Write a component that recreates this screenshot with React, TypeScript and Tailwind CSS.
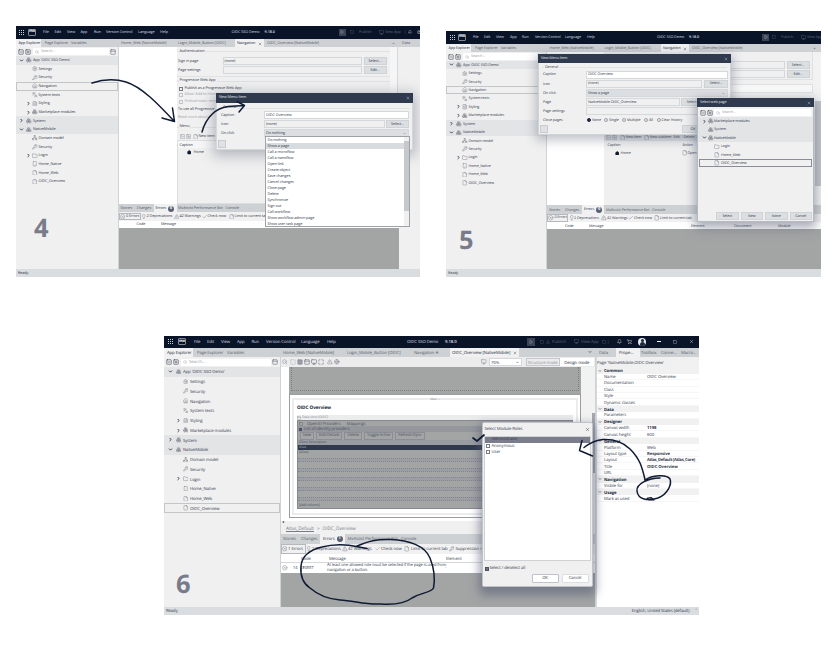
import React, { Fragment, type ReactNode } from "react";
import {
  Boxes, ChevronDown, ChevronRight, File, FileText, Folder, Globe, Home, KeyRound, Languages,
  Lightbulb, Network, Search, Settings, TriangleAlert, Smartphone, Check, CircleX, Columns2,
  Maximize, PanelTop, Square, ShoppingCart, Bell, Play, CircleUser, SquareMinus, SquarePlus, X, Upload, Monitor,
} from "lucide-react";

type Cell = [number, ReactNode, string?];

/* A row of cells; every cell starts at its own tab stop, counted from `from`. */
function Line({ from = 0, at, cls = "" }: { from?: number; at: Cell[]; cls?: string }) {
  return (
    <div className={`flex shrink-0 items-center whitespace-nowrap ${cls}`}>
      <div className="shrink-0" style={{ width: at[0][0] - from }} />
      {at.map(([x, node, c], i) => (
        <div
          key={i}
          className={`flex shrink-0 items-center ${typeof node === "string" ? "pt-[1.5px]" : ""} ${c ?? ""}`}
          style={i < at.length - 1 ? { width: at[i + 1][0] - x } : undefined}
        >
          {node}
        </div>
      ))}
    </div>
  );
}

const ic = "size-[5.5px] shrink-0 text-[#7d818d]";

function Dots() {
  return (
    <div className="grid grid-cols-3 gap-[1px]">
      {Array.from({ length: 9 }, (_, i) => (
        <i key={i} className="size-[1px] bg-[#c9cdd6]" />
      ))}
    </div>
  );
}

function Mx() {
  return (
    <div className="flex h-[7px] w-[8px] items-center justify-center rounded-[1px] border border-[#7d8494] text-[4px] font-bold text-white">
      mx
    </div>
  );
}

const treeItems: { depth: number; label: string; icon: ReactNode; arrow?: "r" | "d" }[] = [
  { depth: 0, label: "App 'OIDC SSO Demo'", icon: <Boxes className={ic} />, arrow: "d" },
  { depth: 1, label: "Settings", icon: <Settings className={ic} /> },
  { depth: 1, label: "Security", icon: <KeyRound className={ic} /> },
  { depth: 1, label: "Navigation", icon: <Home className={ic} /> },
  { depth: 1, label: "System texts", icon: <Languages className={ic} /> },
  { depth: 1, label: "Styling", icon: <FileText className={ic} />, arrow: "r" },
  { depth: 1, label: "Marketplace modules", icon: <Boxes className={ic} />, arrow: "r" },
  { depth: 0, label: "System", icon: <Boxes className={ic} />, arrow: "r" },
  { depth: 0, label: "NativeMobile", icon: <Boxes className={ic} />, arrow: "d" },
  { depth: 1, label: "Domain model", icon: <Network className={ic} /> },
  { depth: 1, label: "Security", icon: <KeyRound className={ic} /> },
  { depth: 1, label: "Login", icon: <Folder className={ic} />, arrow: "r" },
  { depth: 1, label: "Home_Native", icon: <Smartphone className={ic} /> },
  { depth: 1, label: "Home_Web", icon: <File className={ic} /> },
  { depth: 1, label: "OIDC_Overview", icon: <File className={ic} /> },
];

const Arrow = ({ dir }: { dir: "r" | "d" }) =>
  dir === "r" ? <ChevronRight className="size-[5px] text-[#20283b]" strokeWidth={4} /> : <ChevronDown className="size-[5px] text-[#20283b]" strokeWidth={4} />;

/* stops: [arrow depth 0, icon depth 0, label depth 0, arrow depth 1, icon depth 1, label depth 1] */
function Tree({ rowCls, stops, selected }: { rowCls: string; stops: number[]; selected: number }) {
  return (
    <div className="flex flex-col">
      {treeItems.map((t, i) => {
        const o = t.depth * 3;
        return (
          <Line
            key={i}
            cls={`${rowCls} ${t.depth === 0 ? "bg-[#e2e4e6]" : ""} ${i === selected ? "outline outline-1 -outline-offset-1 outline-[#c3c6c9]" : ""}`}
            at={[
              [stops[o], t.arrow ? <Arrow dir={t.arrow} /> : null],
              [stops[o + 1], t.icon],
              [stops[o + 2], t.label],
            ]}
          />
        );
      })}
    </div>
  );
}

function SearchRow({ cls }: { cls: string }) {
  return (
    <div className={`flex shrink-0 items-center gap-[1px] px-[2px] ${cls}`}>
      <SquareMinus className="size-[6px] text-[#20283b]" />
      <SquarePlus className="size-[6px] text-[#20283b]" />
      <div className="ml-[1px] flex h-[7px] flex-1 items-center gap-[2px] bg-white pl-[2px] text-[#9a9da6]">
        <Search className="size-[4px]" />
        <span className="pt-px">Search...</span>
      </div>
      <PanelTop className="size-[6px] text-[#555b6a]" />
    </div>
  );
}

function Input({ cls, children }: { cls: string; children?: ReactNode }) {
  return <div className={`flex items-center border border-[#d5d8da] pl-[1px] pt-px ${cls}`}>{children}</div>;
}

function Btn({ cls = "", children }: { cls?: string; children: ReactNode }) {
  return <div className={`flex items-center justify-center border border-[#cfd3d6] bg-[#dcdfe2] pt-px ${cls}`}>{children}</div>;
}

function Legend({ text, cls = "" }: { text: string; cls?: string }) {
  return (
    <div className={`flex shrink-0 items-center gap-[1px] ${cls}`}>
      <i className="h-px w-[2px] bg-[#dfe1e3]" />
      <span>{text}</span>
      <i className="h-px flex-1 bg-[#dfe1e3]" />
    </div>
  );
}

const Box = ({ dim = false }: { dim?: boolean }) => (
  <i className={`mr-[2px] size-[4px] border ${dim ? "border-[#c2c5ca]" : "border-[#777b87]"}`} />
);

const Radio = ({ on = false }: { on?: boolean }) => (
  <i className={`mr-[1px] size-[4px] rounded-full border ${on ? "border-[#20283b] bg-[#20283b]" : "border-[#9a9da6]"}`} />
);

const Badge = ({ n }: { n: string }) => (
  <b className="ml-[2px] flex size-[6px] items-center justify-center rounded-full bg-[#5a6070] text-[4px] text-white">{n}</b>
);

const dark = "bg-[#0a1429] text-[#d9dce2]";
const bar = "bg-[#ced1d4] text-[#565b69]";
const tabOn = "h-full bg-[#f1f1f1] text-[#20283b]";
const Chip = ({ children, cls = "" }: { children: ReactNode; cls?: string }) => (
  <div className={`flex items-center pt-[1px] ${cls}`}>{children}</div>
);

const ArrowSvg = ({ d, w = 1.5 }: { d: string; w?: number }) => (
  <path d={d} fill="none" stroke="#101a33" strokeWidth={w} strokeLinecap="round" strokeLinejoin="round" />
);

const actions = [
  "Do nothing", "Show a page", "Call a microflow", "Call a nanoflow", "Open link", "Create object", "Save changes",
  "Cancel changes", "Close page", "Delete", "Synchronize", "Sign out", "Call workflow", "Show workflow admin page",
  "Show user task page",
];

function Four() {
  return (
    <section className="absolute left-[16px] top-[26px] flex h-[251px] w-[404px] flex-col overflow-hidden bg-[#f0f0f0] text-[3.8px] tracking-[-0.02em]">
      <Line
        from={16}
        cls={`h-[12.7px] ${dark}`}
        at={[
          [19, <Dots />], [28, <Mx />], [43, "File"], [54.5, "Edit"], [67, "View"], [80.5, "App"], [94, "Run"],
          [106, "Version Control"], [138, "Language"], [160, "Help"], [231.5, "OIDC SSO Demo"], [264.6, "9.18.0", "font-semibold"],
          [339, <div className="flex size-[7px] items-center justify-center bg-[#3b4355]"><Play className="size-[4px]" /></div>],
          [350, <Square className="size-[4px] text-[#5d6474]" />], [359, "Publish", "text-[#5d6474]"],
          [379, <Monitor className="size-[5px] text-[#5d6474]" />], [385, "View App", "text-[#5d6474]"], [404, "|", "text-[#5d6474]"], [408, <Bell className="size-[4px]" />], [417, <CircleUser className="size-[4px]" />],
        ]}
      />
      <Line
        from={16}
        cls={`h-[8.8px] ${bar}`}
        at={[
          [16, <span className="pl-[2.5px] pt-[1.5px]">App Explorer</span>, tabOn], [41, ""], [44.7, "Page Explorer"], [71, "Variables"], [121, "Home_Web [NativeMobile]"],
          [178, "Login_Mobile_Button [OIDC]"], [235, <Chip cls="w-full justify-between px-[2px]">Navigation <X className="size-[4px]" /></Chip>, tabOn],
          [264, ""], [267, "OIDC_Overview [NativeMobile]"], [392, <ChevronDown className="size-[3px]" strokeWidth={5} />], [402, "Data"],
        ]}
      />
      <div className="flex h-[221.5px] shrink-0">
        <aside className="flex w-[102.5px] shrink-0 flex-col border-r border-[#d0d3d6]">
          <SearchRow cls="h-[8.4px]" />
          <Tree rowCls="h-[8.66px]" stops={[3, 10, 17, 10, 16, 22.5]} selected={3} />
        </aside>
        <div className="flex w-[280px] shrink-0 flex-col">
          <div className="flex h-[156.5px] shrink-0">
            <div className="w-[58px] shrink-0 bg-white" />
            <div className="flex w-[213px] shrink-0 flex-col">
              <Legend text="Authentication" cls="h-[9px]" />
              <Line from={177} cls="h-[9px]" at={[[178.5, "Sign in page"], [223, <Input cls="h-[8px] w-[139px]">(none)</Input>], [364, <Btn cls="h-[8px] w-[23px]">Select...</Btn>]]} />
              <Line from={177} cls="h-[9.4px]" at={[[178.5, "Page settings"], [223, <Input cls="h-[8px] w-[139px]" />], [364, <Btn cls="h-[8px] w-[23px]">Edit...</Btn>]]} />
              <div className="mt-[1px] h-px bg-[#dfe1e3]" />
              <Legend text="Progressive Web App" cls="h-[8.6px]" />
              <Line cls="h-[6.6px]" at={[[2, <><Box />Publish as a Progressive Web App</>]]} />
              <Line cls="h-[6.6px] text-[#a5a8ae]" at={[[2, <><Box dim />Allow 'Add to Hom</>]]} />
              <Line cls="h-[6.6px] text-[#a5a8ae]" at={[[2, <><Box dim />Preload static reso</>]]} />
              <Line cls="h-[8.5px]" at={[[1.5, "To use all Progressive"]]} />
              <Line cls="h-[6.5px] text-[#a5a8ae]" at={[[1.5, "Read more about P"]]} />
              <Legend text="Menu" cls="mt-[2px] h-[10px]" />
              <Line from={177} cls="h-[8px]" at={[[180, <SquareMinus className={ic} />], [186, <SquarePlus className={ic} />], [193, <File className={ic} />], [199, "New item"]]} />
              <div className="flex flex-1 flex-col border border-[#dcdee0]">
                <Line cls="h-[7px] bg-[#f6f6f6]" at={[[2, "Caption"]]} />
                <Line cls="h-[8px]" at={[[9, <Home className="size-[4.5px] fill-[#101a33] text-[#101a33]" />], [16, "Home"]]} />
              </div>
            </div>
            <div className="flex w-[8px] justify-center border-r border-[#d5d8da] bg-[#f6f6f6] text-[#888]">ˆ</div>
          </div>
          <Line from={119} cls={`h-[8.5px] ${bar}`} at={[[121, "Stories"], [137, "Changes"], [154, <Chip cls="pl-[2px]">Errors<Badge n="0" /></Chip>, tabOn], [177, ""], [178.5, "MxAssist Performance Bot"], [226, "Console"]]} />
          <Line
            from={119}
            cls="h-[8.2px] bg-[#f1f1f1]"
            at={[[120, <><CircleX className={ic} />&nbsp;0 Errors</>, "outline outline-[0.5px] outline-[#b5b8bd]"], [140, ""], [141, <Lightbulb className={ic} />], [147, "2 Deprecations"], [174, <TriangleAlert className={ic} />], [180, "42 Warnings"], [202, <Check className={ic} />], [208, "Check now"], [229, <File className={ic} />], [235, "Limit to current tab"]]}
          />
          <Line from={119} cls="h-[7.3px] bg-white" at={[[137, "Code"], [161.5, "Message"], [267, "Element"], [311, "Document"], [358, "Module"]]} />
          <div className="h-[41px] bg-[#a2a5a4]" />
        </div>
      </div>
      <div className="flex flex-1 items-center bg-[#d9dde0] pl-[2px] pt-px">Ready</div>

      <div className="absolute left-[200px] top-[67px] flex h-[57px] w-[197px] flex-col border border-[#d5d8da] bg-[#f0f0f0] shadow-[0_3px_12px_3px_#5c647866]">
        <div className="-m-px flex h-[9.5px] shrink-0 items-center justify-between bg-[#303a4e] px-[3px] text-[#e3e5e9]">New Menu Item<X className="size-[4px]" /></div>
        <Legend text="General" cls="mx-[3px] mt-[4px] h-[5px]" />
        <Line from={217} cls="h-[9px]" at={[[221, "Caption"], [264, <Input cls="h-[8px] w-[145px] bg-white">OIDC Overview</Input>]]} />
        <Line from={217} cls="h-[9px]" at={[[221, "Icon"], [264, <Input cls="h-[8px] w-[121px]">(none)</Input>], [386, <Btn cls="h-[8px] w-[23px]">Select...</Btn>]]} />
        <Line from={217} cls="h-[9.5px]" at={[[221, "On click"], [264, <Input cls="h-[8px] w-[145px] justify-between bg-[#dcdfe2] pr-[2px]">Do nothing<ChevronDown className="size-[3px]" /></Input>]]} />
        <div className="ml-[1px] mt-[2px] size-[8px] border border-[#c8cbd0] bg-[#dfe1e4]" />
      </div>
      <div className="absolute left-[249px] top-[110px] flex h-[91px] w-[145px] border border-[#9da1a8] bg-white">
        <div className="flex flex-1 flex-col">
          {actions.map((a, i) => (
            <div key={a} className={`flex h-[6px] shrink-0 items-center pl-[1.5px] pt-[1px] ${i === 1 ? "bg-[#d9dcdf]" : ""}`}>{a}</div>
          ))}
        </div>
        <div className="flex w-[5px] flex-col bg-[#f0f0f0]">
          <i className="mt-[4px] h-[70px] bg-[#c5c9cc]" />
        </div>
      </div>
      <b className="absolute left-[18px] top-[190px] text-[25.5px] font-bold leading-[25px] tracking-normal text-[#797b8b]">4</b>
      <svg className="absolute left-0 top-0 h-[251px] w-[404px]" viewBox="16 26 404 251">
        <ArrowSvg d="M92 83C104 79 116 79 126 82C142 87 158 104 174 121M162 118L174.500 121.500L172.500 108" />
        <ArrowSvg d="M202 132C206 117 216 108 228 106.500C234 106 240 106 244.500 105.500M237 101.500L244.500 105.500L239 112" />
      </svg>
    </section>
  );
}

function Five() {
  return (
    <section className="absolute left-[446px] top-[31px] flex h-[246px] w-[375px] flex-col overflow-hidden bg-[#f0f0f0] text-[3.7px] tracking-[-0.02em]">
      <Line
        from={446}
        cls={`h-[12.8px] ${dark}`}
        at={[
          [450, <Dots />], [458, <Mx />], [473, "File"], [484, "Edit"], [496, "View"], [510, "App"], [522, "Run"], [535, "Version Control"],
          [565, "Language"], [587, "Help"], [657, "OIDC SSO Demo"], [689, "9.18.0", "font-semibold"],
          [762, <div className="flex size-[7px] items-center justify-center bg-[#3b4355]"><Play className="size-[4px]" /></div>],
          [772, <Square className="size-[4px] text-[#5d6474]" />], [781, "Publish", "text-[#5d6474]"],
          [801, <Monitor className="size-[5px] text-[#5d6474]" />], [807, "View App", "text-[#5d6474]"],
        ]}
      />
      <Line
        from={446}
        cls={`h-[8.7px] ${bar}`}
        at={[
          [446, <span className="pl-[2.5px] pt-[1.5px]">App Explorer</span>, tabOn], [471, ""], [475, "Page Explorer"], [501, "Variables"], [549.5, "Home_Web [NativeMobile]"],
          [604.5, "Login_Mobile_Button [OIDC]"], [661, <Chip cls="w-full justify-between px-[2px]">Navigation <X className="size-[4px]" /></Chip>, tabOn],
          [689, ""], [692, "OIDC_Overview [NativeMobile]"], [813, <ChevronDown className="size-[3px]" strokeWidth={5} />],
        ]}
      />
      <div className="flex h-[216.5px] shrink-0">
        <aside className="flex w-[101px] shrink-0 flex-col border-r border-[#d0d3d6]">
          <SearchRow cls="h-[8.2px]" />
          <Tree rowCls="h-[8.43px]" stops={[3, 10, 17, 10, 16, 22.5]} selected={3} />
        </aside>
        <div className="flex flex-1 flex-col">
          <div className="flex h-[153px] shrink-0">
            <div className="w-[56.500px] shrink-0 bg-white" />
            <div className="flex w-[209px] shrink-0 flex-col">
              <div className="flex h-[28px] shrink-0 flex-col items-end gap-[1px] border-b border-r border-[#dfe1e3] pr-[2px] pt-[9px]">
                <div className="flex gap-[2px]"><Input cls="h-[8px] w-[136px]">(none)</Input><Btn cls="h-[8px] w-[23px]">Select...</Btn></div>
                <div className="flex gap-[2px]"><Input cls="h-[8px] w-[136px]" /><Btn cls="h-[8px] w-[23px]">Edit...</Btn></div>
              </div>
              <div className="mt-[4px] h-[9px] shrink-0 border border-[#dfe1e3] bg-[#f8f8f8]" />
              <Line from={603} cls="mt-[40px] h-[8px] bg-[#dcdfe2]" at={[[605, <SquareMinus className={ic} />], [611, <SquarePlus className={ic} />], [619, <File className={ic} />], [625, "New item"], [643, <File className={ic} />], [649, "New subitem"], [673, "Edit"], [683, "Delete"]]} />
              <Line from={603} cls="h-[7.500px]" at={[[607, "Caption"], [682, "Action"]]} />
              <Line from={603} cls="h-[8px]" at={[[614, <Home className="size-[4.500px] fill-[#101a33] text-[#101a33]" />], [620, "Home"], [681, <File className={ic} />], [687, "Open page"]]} />
            </div>
            <div className="flex flex-1 flex-col items-end bg-[#f2f2f2]"><i className="mt-[49px] h-[85px] w-[6px] bg-[#c2c6c9]" /></div>
          </div>
          <Line from={547} cls={`h-[8.5px] ${bar}`} at={[[549, "Stories"], [565, "Changes"], [582, <Chip cls="pl-[2px]">Errors<Badge n="0" /></Chip>, tabOn], [604, ""], [606, "MxAssist Performance Bot"], [652, "Console"]]} />
          <Line
            from={547}
            cls="h-[8.2px] bg-[#f1f1f1]"
            at={[[548, <><CircleX className={ic} />&nbsp;0 Errors</>, "outline outline-[0.5px] outline-[#b5b8bd]"], [567, ""], [569, <Lightbulb className={ic} />], [574, "2 Deprecations"], [601, <TriangleAlert className={ic} />], [607, "42 Warnings"], [628, <Check className={ic} />], [634, "Check now"], [654, <File className={ic} />], [660, "Limit to current tab"]]}
          />
          <Line from={547} cls="h-[7.3px] bg-white" at={[[565, "Code"], [589, "Message"], [691, "Element"], [734, "Document"], [778, "Module"]]} />
          <div className="h-[39.500px] bg-[#a2a5a4]" />
        </div>
      </div>
      <div className="flex flex-1 items-center bg-[#d9dde0] pl-[2px] pt-px">Ready</div>

      <div className="absolute left-[92px] top-[23px] flex h-[81px] w-[193px] flex-col border border-[#d0d3d6] bg-[#f0f0f0] shadow-[0_3px_10px_2px_#5c647866]">
        <div className="-m-px flex h-[9px] shrink-0 items-center justify-between bg-[#303a4e] px-[3px] text-[#e3e5e9]">New Menu Item<X className="size-[4px]" /></div>
        <Legend text="General" cls="mx-[3px] mt-[3px] h-[5px]" />
        <Line from={539} cls="h-[9.2px]" at={[[543, "Caption"], [586, <Input cls="h-[8px] w-[142px] bg-white">OIDC Overview</Input>]]} />
        <Line from={539} cls="h-[9.200px]" at={[[543, "Icon"], [586, <Input cls="h-[8px] w-[116px]">(none)</Input>], [704, <Btn cls="h-[8px] w-[24px]">Select...</Btn>]]} />
        <Line from={539} cls="h-[9.200px]" at={[[543, "On click"], [586, <Input cls="h-[8px] w-[142px] justify-between bg-[#dcdfe2] pr-[2px]">Show a page<ChevronDown className="size-[3px]" /></Input>]]} />
        <Line from={539} cls="h-[9.200px]" at={[[543, "Page"], [586, <Input cls="h-[8px] w-[94px]">NativeMobile.OIDC_Overview</Input>], [681, <Btn cls="h-[8px] w-[24px]">Select...</Btn>]]} />
        <Line from={539} cls="h-[9.200px]" at={[[543, "Page settings"], [586, <Input cls="h-[8px] w-[116px]" />]]} />
        <Line from={539} cls="h-[9px]" at={[[543, "Close pages"], [587, <><Radio on />None</>], [604, <><Radio />Single</>], [622, <><Radio />Multiple</>], [644, <><Radio />All</>], [656.500, <><Radio />Clear history</>]]} />
        <Line from={539} cls="h-[9px]" at={[[540, <div className="size-[8px] border border-[#c8cbd0] bg-[#dfe1e4]" />], [682, <Btn cls="h-[8px] w-[22px]">OK</Btn>]]} />
      </div>

      <div className="absolute left-[251px] top-[67px] flex h-[124px] w-[117px] flex-col border border-[#b5b9c0] bg-[#f0f0f0] shadow-[0_4px_10px_2px_#5c647888]">
        <div className="-m-px flex h-[9px] shrink-0 items-center justify-between bg-[#303a4e] px-[3px] text-[#e3e5e9]">Select web page<X className="size-[4px]" /></div>
        <div className="mt-[3px] flex h-[7px] shrink-0 items-center gap-[1px] px-[2px]">
          <SquareMinus className="size-[6px] text-[#20283b]" />
          <SquarePlus className="size-[6px] text-[#20283b]" />
          <div className="flex h-[7px] flex-1 items-center gap-[2px] bg-white pl-[2px] text-[#9a9da6]"><Search className="size-[4px]" />Search...</div>
        </div>
        <Line from={698} cls="mt-[1px] h-[8.400px] bg-[#e2e4e6]" at={[[702, <Arrow dir="r" />], [708, <Boxes className={ic} />], [714, "Marketplace modules"]]} />
        <Line from={698} cls="h-[8.400px] bg-[#e2e4e6]" at={[[708, <Boxes className={ic} />], [714, "System"]]} />
        <Line from={698} cls="h-[8.400px] bg-[#e2e4e6]" at={[[702, <Arrow dir="d" />], [708, <Boxes className={ic} />], [714, "NativeMobile"]]} />
        <Line from={698} cls="h-[8.400px]" at={[[714, <Folder className={ic} />], [721, "Login"]]} />
        <Line from={698} cls="h-[8.400px]" at={[[714, <File className={ic} />], [721, "Home_Web"]]} />
        <div className="mx-[1px] border border-[#8a8d99]">
          <Line from={700} cls="h-[6.500px]" at={[[714, <File className={ic} />], [721, "OIDC_Overview"]]} />
        </div>
        <div className="mb-[1px] mr-[1px] mt-auto flex justify-end gap-[2px]">
          <Btn cls="h-[8px] w-[22.500px]">Select</Btn>
          <Btn cls="h-[8px] w-[22.500px]">New</Btn>
          <Btn cls="h-[8px] w-[22.500px]">None</Btn>
          <Btn cls="h-[8px] w-[22.500px]">Cancel</Btn>
        </div>
      </div>
      <b className="absolute left-[13px] top-[197px] text-[25.500px] font-bold leading-[25px] tracking-normal text-[#797b8b]">5</b>
    </section>
  );
}

const props: [string, string?, string?][] = [
  ["*Common"], ["Name", "OIDC Overview"], ["Documentation"], ["Class"], ["Style"], ["Dynamic classes"], ["*Data"], ["Parameters"],
  ["*Designer"], ["Canvas width", "1198", "font-bold"], ["Canvas height", "600"], ["*General"], ["Platform", "Web"],
  ["Layout type", "Responsive", "font-bold"], ["Layout", "Atlas_Default (Atlas_Core)", "font-bold tracking-[-0.06em]"], ["Title", "OIDC Overview", "font-bold"],
  ["URL"], ["*Navigation"], ["Visible for", "(none)"], ["*Usage"], ["Mark as used", "No"],
];

function Six() {
  return (
    <section className="absolute left-[164px] top-[336px] flex h-[279px] w-[535px] flex-col overflow-hidden bg-[#f0f0f0] text-[4.250px] tracking-[-0.02em]">
      <Line
        from={164}
        cls={`h-[11.500px] ${dark}`}
        at={[
          [168, <Dots />], [178, <Mx />], [194, "File"], [207, "Edit"], [221, "View"], [237, "App"], [251.500, "Run"], [266, "Version Control"],
          [301, "Language"], [327, "Help"], [407, "OIDC SSO Demo"], [445, "9.18.0", "font-semibold"],
          [527, <div className="flex size-[8px] items-center justify-center bg-[#3b4355]"><Play className="size-[4px]" /></div>],
          [540, <Square className="size-[4px] text-[#5d6474]" />], [546, <Upload className="size-[4px] text-[#5d6474]" />], [552, "Publish", "text-[#5d6474]"],
          [574, <Monitor className="size-[5px] text-[#5d6474]" />], [581, "View App", "text-[#5d6474]"], [602, <Square className="size-[4px] text-[#5d6474]" />], [607, "|", "text-[#5d6474]"],
          [617, <Bell className="size-[5px]" />], [627, <ShoppingCart className="size-[5px]" />],
          [638, <div className="flex size-[8px] flex-col items-center overflow-hidden rounded-full bg-[#e8eaed]"><i className="mt-[1px] size-[3px] rounded-full bg-[#20283b]" /><i className="h-[4px] w-[5px] rounded-t-full bg-[#20283b]" /></div>],
          [657, <i className="h-px w-[4px] bg-white" />], [673, <Square className="size-[4px]" />], [689, <X className="size-[5px]" />],
        ]}
      />
      <Line
        from={164}
        cls={`h-[9.800px] ${bar}`}
        at={[
          [164, <span className="pl-[3px] pt-[1.5px]">App Explorer</span>, tabOn], [193, ""], [197, "Page Explorer"], [227, "Variables"], [283, "Home_Web [NativeMobile]"],
          [347, "Login_Mobile_Button [OIDC]"], [414, "Navigation ✳"], [450, <Chip cls="w-full justify-between px-[2px]">OIDC_Overview [NativeMobile] <X className="size-[4px]" /></Chip>, tabOn],
          [519, ""], [588, <ChevronDown className="size-[4px]" strokeWidth={5} />], [596, ""], [599, "Data"], [616, <Chip cls="pl-[3px]">Prope...</Chip>, tabOn], [640, ""], [641, "Toolbox"], [661, "Conne..."], [681, "Macro..."],
        ]}
      />
      <div className="flex h-[249.700px] shrink-0">
        <aside className="flex w-[116px] shrink-0 flex-col">
          <SearchRow cls="h-[9.500px]" />
          <Tree rowCls="h-[9.760px]" stops={[4, 11.500, 19, 11.500, 18.500, 26]} selected={14} />
        </aside>
        <div className="flex w-[316px] shrink-0 flex-col border-x border-[#d0d3d6]">
          <Line
            from={281}
            cls="h-[9.700px] bg-[#ececed]"
            at={[[282, <Search className={ic} />], [290, <Square className="size-[6px] text-[#b4b7bd]" />], [297, <Columns2 className="size-[6px] fill-[#a0a3aa] text-[#81858f]" />], [304, <PanelTop className="size-[6px] text-[#565b69]" />], [311, <Monitor className="size-[6px] text-[#565b69]" />], [318, <Maximize className="size-[6px] text-[#565b69]" />], [327, <TriangleAlert className={ic} />], [334, <Globe className={ic} />], [481, <Monitor className={ic} />],
              [489, <Input cls="h-[8px] w-[33px] justify-between bg-white pr-[2px]">70%<ChevronDown className="size-[3px]" strokeWidth={4} /></Input>],
              [525.500, <div className="flex h-[8px] w-[34.500px] items-center justify-center border border-[#c5c8cd] pt-px text-[#8b8f9a]">Structure mode</div>],
              [560, <div className="flex h-[8px] w-[33.500px] items-center justify-center bg-white pt-px text-[#20283b]">Design mode</div>]]}
          />
          <div className="flex h-[154px] shrink-0 bg-white pl-[8px]">
            <div className="flex w-[292px] flex-col">
              <div className="flex h-[27.500px] shrink-0 items-end justify-center bg-[#a2a5a4] px-[2px] pb-[3px]"><i className="h-full w-full border-x border-b border-dotted border-[#7d8087]" /></div>
              <div className="flex h-[124px] shrink-0 flex-col border border-[#9a9da0] bg-white px-[2px] pt-[3px]">
                <div className="flex h-[117px] flex-col border-2 border-[#ececec] px-[3px]">
                  <div className="-mt-[2px] flex h-[3px] justify-center text-[3px] text-[#888]">Main ⌄</div>
                  <div className="flex h-[14px] shrink-0 items-center text-[4.700px] font-bold text-[#101a33]">OIDC Overview</div>
                  <div className="flex h-[4.500px] shrink-0 items-center gap-[1px] bg-[#ebecec] text-[3.500px] text-[#888b93]"><PanelTop className="size-[4px]" />Data view (OIDC)</div>
                  <div className="flex h-[89px] shrink-0 flex-col border border-[#85888e] bg-[#a2a5a4] text-[#4c5163]">
                    <div className="flex h-[5.500px] shrink-0 items-center gap-[4px] pl-[1px]"><Square className="size-[4px]" />OpenID Providers<span className="ml-[2px]">Mappings</span></div>
                    <div className="flex h-[6px] shrink-0 items-center bg-[#94979c] pl-[1px]"><i className="mr-[2px] size-[3px] bg-[#4c5163]" />List of identity providers</div>
                    <div className="flex h-[8px] shrink-0 items-center gap-[2px] pl-[2px]">
                      {["New", "Edit/Details", "Delete", "Toggle Active", "Refresh/Sync"].map((b) => (
                        <span key={b} className="border border-[#8b8e96] px-[2px] py-[1px] text-[4px]">{b}</span>
                      ))}
                    </div>
                    <div className="flex h-[5px] shrink-0 items-center bg-[#999ca0] pl-[1px] text-[3.500px]">Client Description</div>
                    <div className="flex h-[5px] shrink-0 items-center bg-[#303a4e] pl-[1px] text-[3.500px] text-[#a2a5a4]">Alias</div>
                    <div className="flex h-[5px] shrink-0 items-center pl-[1px] text-[3.500px]">[Alias]</div>
                    {[0, 1, 2, 3, 4].map((n) => (
                      <div key={n} className="flex h-[9.600px] shrink-0 items-center"><i className="h-[4px] w-full border-y border-dotted border-[#83868f] bg-[#9b9ea3]" /></div>
                    ))}
                    <div className="flex flex-1 items-center pl-[1px] text-[3.500px]">[Add column]</div>
                  </div>
                </div>
              </div>
            </div>
            <div className="flex flex-1 flex-col items-end bg-[#f2f2f2]"><i className="mt-[46px] h-[60px] w-[3px] bg-[#a4a7ae]" /></div>
          </div>
          <div className="h-[3px] shrink-0 pl-[1px] text-[4px]">◂</div>
          <Line from={281} cls="h-[10px] text-[4.750px] text-[#777b87]" at={[[286, <><span className="underline">Atlas_Default</span><span className="px-[3px]">&gt;</span> OIDC_Overview</>, "pt-[1.5px]"]]} />
          <Line from={281} cls={`h-[9.700px] ${bar}`} at={[[283, "Stories"], [301, "Changes"], [320, <Chip cls="pl-[3px]">Errors<Badge n="1" /></Chip>, tabOn], [345, ""], [347.500, "MxAssist Performance Bot"], [401, "Console"]]} />
          <Line
            from={281}
            cls="h-[10.300px] bg-[#f1f1f1]"
            at={[[281.500, <><CircleX className={ic} />&nbsp;1 Errors</>, "h-[8px] outline outline-[0.500px] outline-[#b5b8bd]"], [304.500, ""], [306, <Lightbulb className={ic} />], [312, "2 Deprecations"], [342, <TriangleAlert className={ic} />], [348, "42 Warnings"], [375, <Check className={ic} />], [381, "Check now"], [404, <File className={ic} />], [411, "Limit to current tab"], [448.500, <KeyRound className={ic} />], [455.500, "Suppression rules"]]}
          />
          <Line from={281} cls="h-[8px] bg-white" at={[[301, "Code"], [329, "Message"], [446, "Element"], [500, "Document"]]} />
          <Line
            from={281}
            cls="h-[10.800px] border-t border-[#d5d8da] bg-white text-[4.050px]"
            at={[[282, <CircleX className={ic} />], [293, "14"], [300, "CE0557"], [327, <div className="pt-[1.5px] leading-[4.500px]">At least one allowed role must be selected if the page is used from<br />navigation or a button.</div>], [445, "-"]]}
          />
          <div className="flex-1 bg-[#a2a5a4]" />
        </div>
        <div className="flex flex-1 flex-col border-l border-[#d5d8da] bg-white">
          <div className="flex h-[10px] shrink-0 items-center whitespace-nowrap bg-[#f0f0f0] pt-px">Page 'NativeMobile.OIDC Overview'</div>
          <div className="flex flex-col">
            {props.map(([k, v, c], i) => {
              const head = k.startsWith("*");
              return (
                <Line
                  key={i}
                  from={597}
                  cls={`h-[6.420px] ${head ? "bg-[#f1f1f2] font-bold text-[#20283b]" : "border-b border-[#f6f6f6]"}`}
                  at={[[598, head ? <ChevronDown className="size-[4px]" strokeWidth={3} /> : null], [604, head ? k.slice(1) : k], [647, v ?? "", c]]}
                />
              );
            })}
          </div>
        </div>
      </div>
      <div className="flex flex-1 items-center justify-between bg-[#d9dde0] pl-[2px] pr-[2px] pt-px">
        <span>Ready</span>
        <span className="flex items-center gap-[6px]">English, United States (default)<span>ˆ</span></span>
      </div>

      <div className="absolute left-[317.500px] top-[86px] flex h-[164.500px] w-[111px] flex-col rounded-[2px] border border-[#bfc2c8] bg-[#f0f0f0] px-[1px] shadow-[0_5px_10px_3px_#50567088]">
        <div className="flex h-[12.500px] shrink-0 items-center justify-between px-[1px]">Select Module Roles<X className="size-[5px]" /></div>
        <div className="flex h-[125px] shrink-0 flex-col border border-[#cfd2d5] bg-white">
          {["Administrator", "Anonymous", "User"].map((r, i) => (
            <div key={r} className={`flex h-[6.200px] items-center pl-[1px] ${i === 0 ? "bg-[#7b7d8c] text-[#343b4e]" : ""}`}><Box />{r}</div>
          ))}
        </div>
        <div className="mt-[4px] flex h-[8px] shrink-0 items-center pl-[1px]"><i className="mr-[1px] size-[4px] border border-[#4c5262] bg-[#6d7180]" />Select / deselect all</div>
        <div className="mt-[1px] flex justify-end gap-[3px] pr-[2px]">
          <div className="flex h-[9px] w-[27px] items-center justify-center rounded-[1px] border border-[#bfc2c8] bg-white pt-px">OK</div>
          <div className="flex h-[9px] w-[27px] items-center justify-center rounded-[1px] border border-[#dcdee1] bg-white pt-px">Cancel</div>
        </div>
      </div>
      <b className="absolute left-[12px] top-[236px] text-[25.500px] font-bold leading-[25px] tracking-normal text-[#797b8b]">6</b>
      <svg className="absolute left-0 top-0 h-[279px] w-[535px]" viewBox="164 336 535 279">
        <ArrowSvg d="M473 438L477 441L484 435" w={1.7} />
        <ArrowSvg d="M584 447.500C590 443 595 440 603 439.500C616 439 624 443 630 449C640 459 642 467 645 479.500M582 440.500L579.500 450.500L592.500 456" />
        <ArrowSvg d="M660 478C648 478 636 484 637 491C638 500 648 501 658 498C668 494 672 484 670 479C667 474 652 475 645 480" />
        <ArrowSvg d="M647 498.500L651 497.500L654 500L649 500" w={1.2} />
        <ArrowSvg d="M367 548.500L356 546.500C347 544 333 544 322 547C309 550 302 556 301 566C300 577 304 584 310 588C318 595 328 599 340 600C355 601 366 605 381 604C398 605 407 602 412 598C422 592 431 593 433.500 588C435 580 434 568 430 558C425 546 409 540 391 539.500C376 539 369 541 356 546.500" />
      </svg>
    </section>
  );
}

export default function App() {
  return (
    <Fragment>
      <main className="relative h-[672px] w-[840px] overflow-hidden bg-white font-['Open_Sans','Noto_Sans',sans-serif] leading-none text-[#343a4c] [text-rendering:geometricPrecision]">
        <Four />
        <Five />
        <Six />
      </main>
    </Fragment>
  );
}
